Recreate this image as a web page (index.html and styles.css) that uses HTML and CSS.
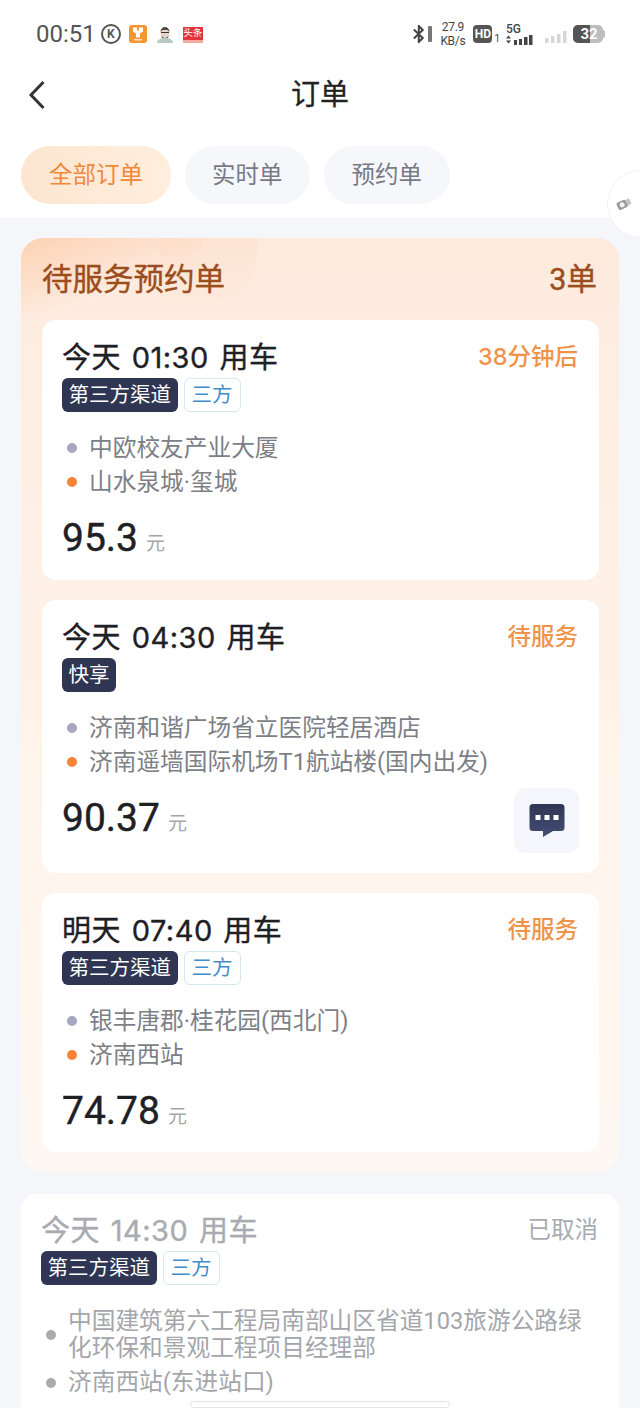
FILE: index.html
```html
<!DOCTYPE html>
<html lang="zh-CN">
<head>
  <meta charset="UTF-8">
  <title>订单</title>
  <link rel="stylesheet" href="styles.css">
</head>
<body>
<div class="phone">
  <div class="top">
    <div class="statusbar">
      <div class="status-left">
        <span class="clock">00:51</span>
        <span class="k-icon">K</span>
        <svg class="app-icon" width="18" height="18" viewBox="0 0 18 18"><rect width="18" height="18" rx="3" fill="#f5962e"/><path d="M4 2.500h4v3h2v-3h4v4l-3 2v4H7v-4l-3-2z" fill="#fff"/><rect x="5" y="14" width="8" height="1.500" fill="#fde3c4"/></svg>
        <svg class="app-icon avatar" width="18" height="16" viewBox="0 0 18 16"><path d="M1 16c0-3 3-5 8-5s8 2 8 5z" fill="#b9c9c4"/><circle cx="9" cy="6" r="4.500" fill="#e8d3c4"/><path d="M4.500 5c0-3 2-5 4.500-5s4.500 2 4.500 5l-2-2h-5z" fill="#4a4a4a"/><path d="M5 7c1 5 7 5 8 0l-1 4H6z" fill="#666"/><path d="M5 5.500h8" stroke="#333" stroke-width="1"/></svg>
        <span class="news-icon">头条</span>
      </div>
      <div class="status-right">
        <svg width="19" height="18" viewBox="0 0 19 18"><path d="M0.800 4.500l9 8.500-4 4V1l4 4-9 8.500" fill="none" stroke="#444" stroke-width="2"/><rect x="15" y="1" width="4" height="16" rx="1" fill="#777"/></svg>
        <span class="speed">27.9<br>KB/s</span>
        <span class="hd">HD</span><span class="sim">1</span>
        <span class="signal">
          <span class="net">5G</span>
          <svg width="27" height="10" viewBox="0 0 27 10"><g fill="#444"><path d="M0 3.500h5L2.500 0.500zM0 5.500h5L2.500 8.500z"/><rect x="8" y="5" width="3" height="5"/><rect x="13" y="4" width="3" height="6"/><rect x="18" y="2" width="3.500" height="8"/><rect x="23" y="0" width="3.500" height="10"/></g></svg>
        </span>
        <svg class="signal-off" width="22" height="12" viewBox="0 0 22 12"><g fill="#d6d6d6"><rect x="0" y="7" width="3.500" height="5"/><rect x="6" y="5" width="3.500" height="7"/><rect x="12" y="3" width="3.500" height="9"/><rect x="18" y="0" width="3.500" height="12"/></g></svg>
        <span class="battery"><span class="battery-fill"></span><span class="battery-num">32</span></span>
      </div>
    </div>
    <div class="navbar">
      <svg class="back" width="20" height="32" viewBox="0 0 20 32"><path d="M17.500 3L5 16l12.500 13" fill="none" stroke="#333" stroke-width="3"/></svg>
      <h1>订单</h1>
    </div>
    <div class="tabs">
      <span class="tab active">全部订单</span>
      <span class="tab">实时单</span>
      <span class="tab">预约单</span>
    </div>
  </div>

  <div class="side-tab">
    <svg width="16" height="14" viewBox="0 0 16 14"><g transform="rotate(-25 8 7)"><rect x="1" y="3" width="10" height="8" rx="2" fill="#999"/><rect x="11" y="4" width="4" height="6" rx="1" fill="#c4c4c4"/><circle cx="6" cy="7" r="2.500" fill="#f2f2f2"/></g></svg>
  </div>

  <div class="content">
    <section class="group">
      <div class="group-head">
        <span>待服务预约单</span>
        <span>3单</span>
      </div>
      <div class="order first">
        <div class="order-head">
          <span class="when">今天 01:30 用车</span>
          <span class="state">38分钟后</span>
        </div>
        <div class="tags"><span class="tag dark">第三方渠道</span><span class="tag light">三方</span></div>
        <ul class="route">
          <li class="from">中欧校友产业大厦</li>
          <li class="to">山水泉城·玺城</li>
        </ul>
        <div class="price"><b>95.3</b><span>元</span></div>
      </div>
      <div class="order tall">
        <div class="order-head">
          <span class="when">今天 04:30 用车</span>
          <span class="state">待服务</span>
        </div>
        <div class="tags"><span class="tag dark">快享</span></div>
        <ul class="route">
          <li class="from">济南和谐广场省立医院轻居酒店</li>
          <li class="to">济南遥墙国际机场T1航站楼(国内出发)</li>
        </ul>
        <div class="price"><b>90.37</b><span>元</span></div>
        <div class="chat">
          <svg width="36" height="36" viewBox="0 0 36 36">
            <defs><linearGradient id="chatfill" x1="0" y1="0" x2="0" y2="1"><stop offset="0" stop-color="#2f3654"/><stop offset="1" stop-color="#454d78"/></linearGradient></defs>
            <path d="M4 1h28a3.500 3.500 0 0 1 3.500 3.500v20a3.500 3.500 0 0 1-3.500 3.500h-8l-10 6v-6H4a3.500 3.500 0 0 1-3.500-3.500v-20A3.500 3.500 0 0 1 4 1z" fill="url(#chatfill)"/>
            <g fill="#fff"><rect x="6.500" y="12" width="5" height="5"/><rect x="15.500" y="12" width="5" height="5"/><rect x="24.500" y="12" width="5" height="5"/></g>
          </svg>
        </div>
      </div>
      <div class="order">
        <div class="order-head">
          <span class="when">明天 07:40 用车</span>
          <span class="state">待服务</span>
        </div>
        <div class="tags"><span class="tag dark">第三方渠道</span><span class="tag light">三方</span></div>
        <ul class="route">
          <li class="from">银丰唐郡·桂花园(西北门)</li>
          <li class="to">济南西站</li>
        </ul>
        <div class="price"><b>74.78</b><span>元</span></div>
      </div>
    </section>

    <section class="order cancelled">
      <div class="order-head">
        <span class="when">今天 14:30 用车</span>
        <span class="state">已取消</span>
      </div>
      <div class="tags"><span class="tag dark">第三方渠道</span><span class="tag light">三方</span></div>
      <ul class="route">
        <li>中国建筑第六工程局南部山区省道103旅游公路绿化环保和景观工程项目经理部</li>
        <li>济南西站(东进站口)</li>
      </ul>
    </section>
  </div>

  <div class="home-bar"></div>
</div>
</body>
</html>
```

FILE: styles.css
```css
* {
  box-sizing: border-box;
  font-family: Roboto, "Noto Sans CJK SC", sans-serif;
}
body {
  margin: 0;
  background: #f4f6fa;
}
.phone {
  position: relative;
  width: 640px;
  height: 1408px;
  overflow: hidden;
  background: #f4f6fa;
}

/* top white area */
.top {
  height: 218px;
  background: #fff;
}
.statusbar {
  display: flex;
  justify-content: space-between;
  align-items: center;
  height: 68px;
  padding: 0 35px 0 36px;
}
.status-left, .status-right {
  display: flex;
  align-items: center;
}
.status-left {
  gap: 8px;
}
.status-right {
  gap: 8px;
}
.clock {
  margin-right: -3px;
  font-size: 24px;
  color: #555;
}
.k-icon {
  display: flex;
  align-items: center;
  justify-content: center;
  width: 20px;
  height: 20px;
  border: 2px solid #555;
  border-radius: 50%;
  font-size: 12px;
  font-weight: 700;
  color: #555;
}
.avatar {
  margin: 2px 0 0 1px;
}
.news-icon {
  width: 20px;
  height: 16px;
  margin: 2px 0 0 1px;
  border-bottom: 3px solid #f3a9a0;
  background: #e0353b;
  color: #fff;
  font-size: 9.500px;
  line-height: 12px;
  text-align: center;
  white-space: nowrap;
  overflow: hidden;
}
.speed {
  width: 25px;
  font-size: 12px;
  letter-spacing: -0.3px;
  line-height: 14px;
  color: #444;
  text-align: center;
  white-space: nowrap;
}
.hd {
  width: 19px;
  height: 18px;
  border-radius: 4px;
  background: #555;
  color: #fff;
  font-size: 12px;
  font-weight: 700;
  line-height: 18px;
  text-align: center;
}
.sim {
  margin: 8px 0 0 -6px;
  font-size: 10px;
  color: #444;
}
.signal {
  display: flex;
  flex-direction: column;
  align-items: flex-start;
  width: 27px;
  margin-left: -2px;
}
.net {
  font-size: 12px;
  line-height: 11px;
  font-weight: 500;
  color: #444;
}
.signal-off {
  margin: 6px -2px 0 4px;
}
.battery {
  position: relative;
  display: block;
  width: 30px;
  height: 18px;
  margin-right: 2px;
  border-radius: 5px;
  background: #bdbdbd;
}
.battery::after {
  content: "";
  position: absolute;
  left: 30px;
  top: 5px;
  width: 2px;
  height: 8px;
  border-radius: 0 2px 2px 0;
  background: #bdbdbd;
}
.battery-fill {
  display: block;
  width: 17px;
  height: 18px;
  border-radius: 5px 0 0 5px;
  background: #555;
}
.battery-num {
  position: absolute;
  left: 0;
  top: 0;
  width: 32px;
  color: #fff;
  font-size: 15px;
  font-weight: 700;
  line-height: 18px;
  text-align: center;
}
.navbar {
  position: relative;
  height: 54px;
  text-align: center;
}
.navbar h1 {
  margin: 0;
  font-size: 29px;
  font-weight: 400;
  -webkit-text-stroke: 0.3px #222;
  line-height: 54px;
  color: #222;
}
.back {
  position: absolute;
  left: 26px;
  top: 11px;
}
.tabs {
  display: flex;
  gap: 14px;
  padding: 24px 0 0 21px;
}
.tab {
  height: 58px;
  padding: 0 27px;
  border-radius: 29px;
  background: #f5f7fb;
  color: #777a84;
  font-size: 23.500px;
  line-height: 58px;
}
.tab:last-child {
  padding: 0 28px;
}
.tab.active {
  padding: 0 28px;
  background: linear-gradient(90deg, #fde6d0, #ffeedd);
  color: #f0893a;
}

.side-tab {
  position: absolute;
  left: 607px;
  top: 170px;
  width: 70px;
  height: 68px;
  padding: 26px 0 0 8px;
  border: 1px solid #f1f1f3;
  border-radius: 34px;
  background: #fff;
}
.side-tab svg {
  display: block;
}

/* order list */
.content {
  padding: 20px 21px 0;
}
.group {
  position: relative;
  height: 934px;
  padding: 0 20px 0 21px;
  border-radius: 22px;
  overflow: hidden;
  background:
    linear-gradient(160deg, #fdd2b3, rgba(253, 220, 196, 0) 62%) 0 0 / 181px 75px no-repeat,
    linear-gradient(180deg, #fdeadd 0, #fef0e6 30%, #fff5ec 70%, #fff8f2 100%);
}
.group::before {
  content: "";
  position: absolute;
  left: 140px;
  top: 0;
  width: 96px;
  height: 66px;
  border-radius: 0 0 50px 0;
  background: linear-gradient(180deg, rgba(253, 213, 186, 0.3), rgba(253, 224, 204, 0.1));
}
.group-head {
  position: relative;
  display: flex;
  justify-content: space-between;
  align-items: center;
  height: 78px;
  margin-bottom: 4px;
  padding-right: 2px;
  font-size: 30.500px;
  font-weight: 400;
  -webkit-text-stroke: 0.4px #9c4d1c;
  color: #9c4d1c;
}
.order {
  position: relative;
  height: 259px;
  margin-bottom: 20px;
  padding: 15px 21px 0 20px;
  border-radius: 14px;
  background: #fff;
}
.order.first {
  height: 260px;
}
.order.tall {
  height: 273px;
}
.order-head {
  display: flex;
  justify-content: space-between;
  align-items: center;
  height: 40px;
}
.when {
  font-family: Inter, "Noto Sans CJK SC", sans-serif;
  font-size: 29px;
  font-weight: 400;
  letter-spacing: 0.5px;
  word-spacing: 2px;
  -webkit-text-stroke: 0.35px #1f2024;
  color: #1f2024;
}
.state {
  font-family: Inter, "Noto Sans CJK SC", sans-serif;
  font-size: 23.500px;
  font-weight: 500;
  color: #f0934a;
}
.tags {
  display: flex;
  gap: 6px;
  margin-top: 3px;
}
.tag {
  height: 34px;
  padding: 0 6.500px;
  border-radius: 6px;
  font-size: 20.500px;
  line-height: 34px;
  white-space: nowrap;
}
.tag.dark {
  background: #2f3654;
  color: #fff;
}
.tag.light {
  padding: 0 7px;
  border: 1px solid #d8e6f0;
  color: #3f8dcb;
  line-height: 32px;
}
.route {
  margin: 22px 0 0;
  padding: 0;
  list-style: none;
}
.route li {
  position: relative;
  padding-left: 27px;
  font-size: 23.700px;
  line-height: 28px;
  margin-bottom: 6px;
  color: #7d7f87;
}
.route li::before {
  content: "";
  position: absolute;
  left: 5px;
  top: 50%;
  width: 10px;
  height: 10px;
  margin-top: -5px;
  border-radius: 50%;
  background: #a6a7c2;
}
.route li.to::before {
  background: #f98336;
}
.price {
  display: flex;
  align-items: center;
  gap: 8px;
  margin-top: 19px;
}
.price b {
  font-size: 39px;
  font-weight: 400;
  -webkit-text-stroke: 0.4px #1f2024;
  color: #1f2024;
}
.price span {
  margin-top: 6px;
  font-size: 19px;
  color: #a5a6ab;
}
.chat {
  position: absolute;
  right: 20px;
  top: 188px;
  display: flex;
  align-items: center;
  justify-content: center;
  width: 65px;
  height: 65px;
  border-radius: 12px;
  background: #f5f6fb;
}
.cancelled {
  height: 240px;
  margin-top: 22px;
  padding-top: 14px;
  border-radius: 16px;
}
.cancelled .when {
  color: #a9abb0;
  -webkit-text-stroke-color: #a9abb0;
}
.cancelled .state {
  color: #a9abb0;
  font-weight: 400;
}
.cancelled .route {
  margin-top: 23px;
}
.cancelled .route li {
  color: #a4a6ab;
  line-height: 27px;
  margin-bottom: 7px;
}
.cancelled .route li::before {
  background: #a9abb0;
}

.home-bar {
  position: absolute;
  left: 190px;
  top: 1401px;
  width: 260px;
  height: 7px;
  border: 1px solid #e4e4e6;
  border-radius: 4px;
  background: #fff;
}
```
